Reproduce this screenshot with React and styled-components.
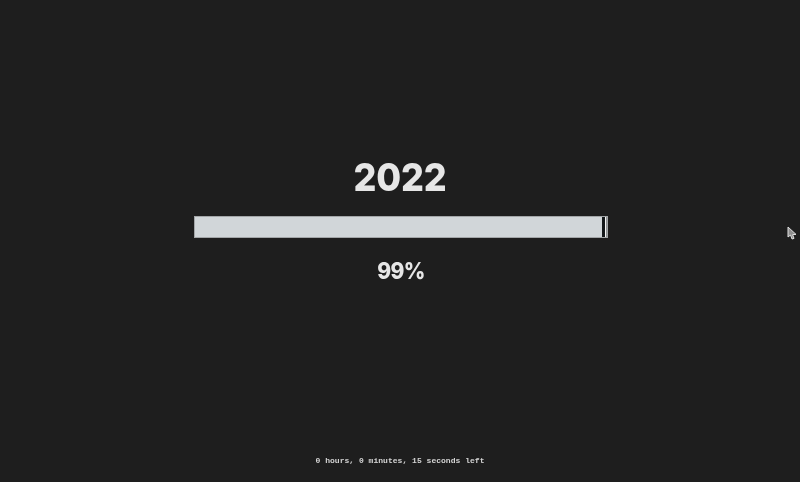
import React from 'react';
import styled, { createGlobalStyle } from 'styled-components';

const Global = createGlobalStyle`
  html, body { margin: 0; padding: 0; background: #1e1e1e; }
  #root { width: 800px; height: 482px; overflow: hidden; }
`;

const Page = styled.div`
  position: relative;
  width: 800px;
  height: 482px;
  background: #1e1e1e;
  display: flex;
  flex-direction: column;
  align-items: center;
  padding-top: 154px;
  box-sizing: border-box;
  filter: blur(0.6px);
`;

const Year = styled.h1`
  margin: 0;
  font: 800 36px/46px Inter, sans-serif;
  color: #e6e6e6;
  letter-spacing: -0.2px;
  transform: scaleY(1.08);
`;

const Track = styled.div`
  margin: 16px 0 0 1px;
  width: 414px;
  height: 22px;
  box-sizing: border-box;
  border: 1px solid #a3a6a8;
  padding-right: 1px;
  display: flex;
  background: #8f9294;
`;

const Fill = styled.div`
  height: 100%;
  background: #d1d6d9;
`;

const Remainder = styled.div`
  flex: 1;
  background: #14181a;
  border-right: 1px solid #f2f2f2;
`;

const Percent = styled.div`
  margin: 19px 0 0 2px;
  font: 800 21px/28px Inter, sans-serif;
  color: #e6e6e6;
  letter-spacing: -0.6px;
  transform: scaleY(1.08);
`;

const TimeLeft = styled.div`
  margin-top: auto;
  margin-bottom: 15px;
  font: 700 8.05px/12px "Liberation Mono", monospace;
  color: #d4d4d4;
  white-space: pre;
`;

const Cursor = styled.svg`
  position: absolute;
  left: 787px;
  top: 226px;
`;

export default function App() {
  return (
    <Page>
      <Global />
      <Year>2022</Year>
      <Track>
        <Fill style={{ width: `${(408 / 412) * 100}%` }} />
        <Remainder />
      </Track>
      <Percent>99%</Percent>
      <TimeLeft>0 hours, 0 minutes, 15 seconds left</TimeLeft>
      <Cursor width="10" height="15" viewBox="0 0 10 15">
        <path d="M1 1 L1 11 L3.5 9 L5 13 L7 12.4 L5.6 8.6 L9 8.4 Z" fill="#8f8f8f" stroke="#e0e0e0" strokeWidth="1" />
      </Cursor>
    </Page>
  );
}
